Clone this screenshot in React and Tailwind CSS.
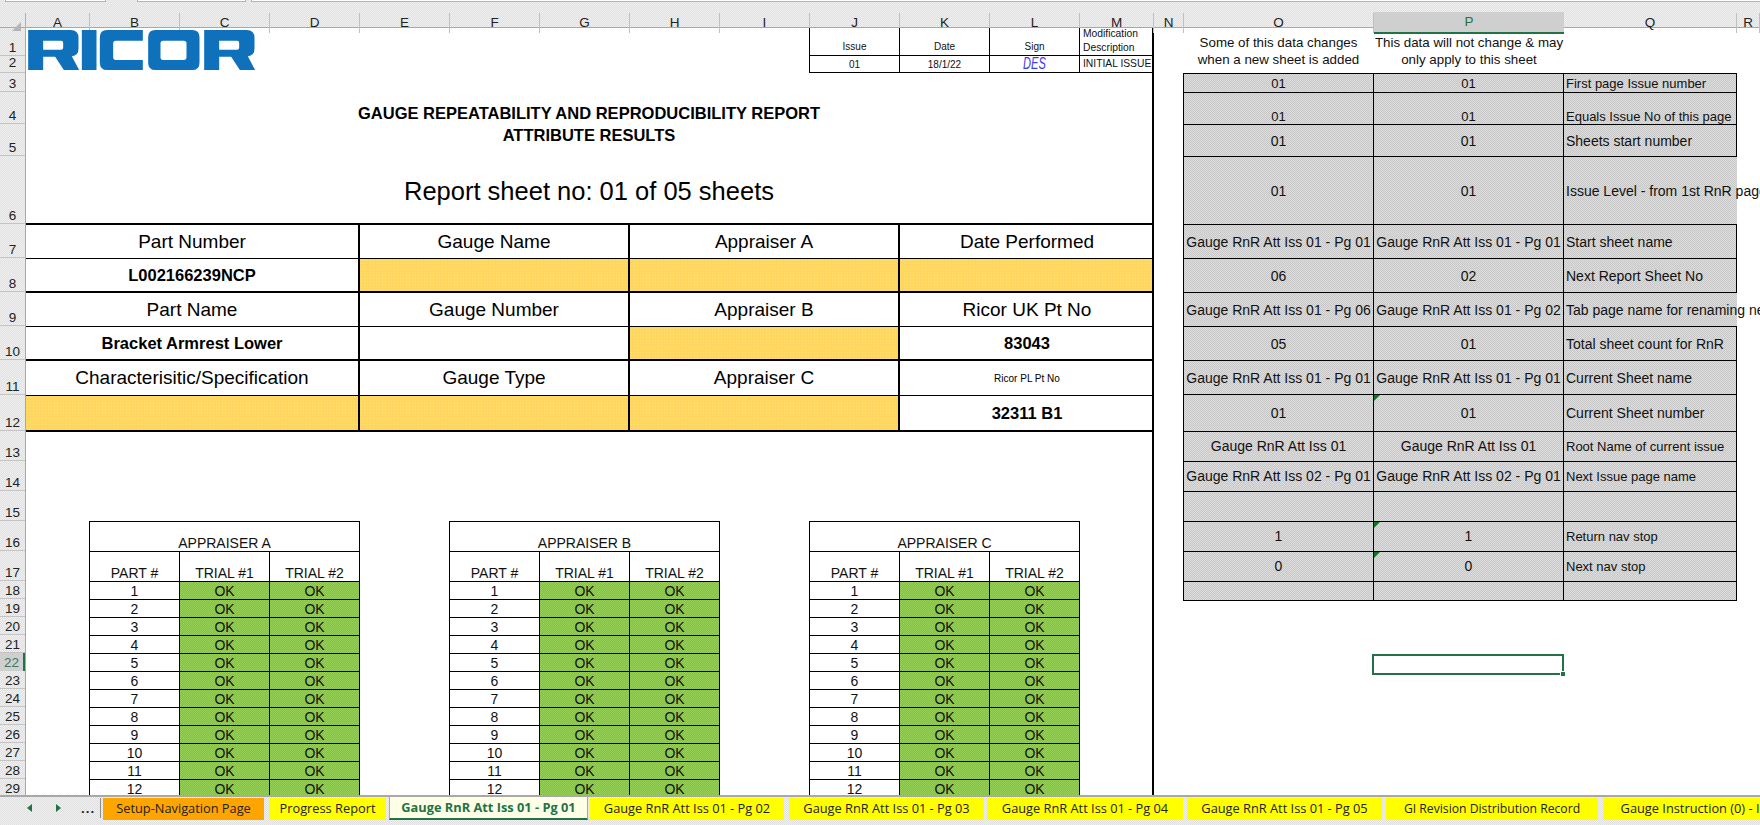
const FONT = "font-['Liberation_Sans',Arial,sans-serif]";
const HEAD_BG = "bg-[#e8e8e8] bg-[conic-gradient(#e0e0e0_25%,#f0f0f0_0_50%,#e0e0e0_0_75%,#f0f0f0_0)] bg-[length:2px_2px]";
const GRAY_BG = "bg-[#d2d2d2] bg-[conic-gradient(#c8c8c8_25%,#dcdcdc_0_50%,#c8c8c8_0_75%,#dcdcdc_0)] bg-[length:2px_2px]";
const GREEN_BG = "bg-[#8cc84f] bg-[conic-gradient(#82c048_25%,#96d056_0_50%,#82c048_0_75%,#96d056_0)] bg-[length:2px_2px]";

const colHeads = ["A", "B", "C", "D", "E", "F", "G", "H", "I", "J", "K", "L", "M", "N", "O", "P", "Q", "R"];
const rowNums = Array.from({ length: 29 }, (_, i) => i + 1);

function Logo() {
  return (
    <svg viewBox="85 90 680 120" className="block w-[227px] h-[40px]" aria-label="RICOR">
      <g fill="#0f71bb" fillRule="evenodd">
        <path d="M85 90H212Q236 90 236 114V146Q236 166 216 169L238 210H192L166 170H130V210H85ZM130 122V149H184Q190 149 190 143V128Q190 122 184 122Z" />
        <path d="M246 90H290V210H246Z" />
        <path d="M322 90H429V122H348Q340 122 340 130V172Q340 180 348 180H429V210H322Q300 210 300 188V112Q300 90 322 90Z" />
        <path d="M467 90H577Q599 90 599 112V188Q599 210 577 210H467Q445 210 445 188V112Q445 90 467 90ZM490 122Q482 122 482 130V172Q482 180 490 180H552Q560 180 560 172V130Q560 122 552 122Z" />
        <path d="M613 90H740Q764 90 764 114V146Q764 166 744 169L766 210H720L694 170H658V210H613ZM658 122V149H712Q718 149 718 143V128Q718 122 712 122Z" />
      </g>
    </svg>
  );
}

function ColumnHeader() {
  return (
    <div className={`relative flex flex-col h-[28px] shrink-0 border-b border-[#a8a8a8] ${HEAD_BG}`}>
      <div className="flex h-[3px] shrink-0">
        <div className="ml-[5px] w-[101px] h-[2px] bg-white border-x border-b border-[#b4b4b4]" />
        <div className="ml-[31px] w-[109px] h-[2px] bg-white border-x border-b border-[#b4b4b4]" />
        <div className="ml-[5px] flex-1 h-[2px] bg-white border-l border-b border-[#b4b4b4]" />
      </div>
      <div className="flex flex-1">
        <div className="relative w-[26px] shrink-0 border-r border-[#b0b0b0] mt-[10px]">
          <div className="absolute right-[4px] bottom-[2px] w-0 h-0 border-l-[9px] border-b-[9px] border-l-transparent border-b-[#b4b4b4]" />
        </div>
        <div className="grid grid-cols-[64px_repeat(11,90px)_74px_30px_190px_190px_173px_1fr] flex-1">
          {colHeads.map((c) => (
            <div
              key={c}
              className={
                c === "P"
                  ? "mt-[9px] -mb-px flex items-center justify-center bg-[#cfcfcf] text-[#217346] border-b-2 border-[#217346] text-[13.5px]"
                  : "mt-[10px] flex items-center justify-center border-r border-[#c0c0c0] text-[13.5px] text-[#222]"
              }
            >
              {c}
            </div>
          ))}
        </div>
      </div>
    </div>
  );
}

function RowHeader() {
  return (
    <div className={`grid w-[26px] shrink-0 grid-rows-[28px_17px_19px_32px_32px_68px_34px_34px_34px_34px_35px_36px_30px_30px_30px_30px_30px_repeat(12,18px)] border-r border-[#a8a8a8] ${HEAD_BG}`}>
      {rowNums.map((n) => (
        <div
          key={n}
          className={
            n === 22
              ? "flex items-end justify-center bg-[#cfcfcf] text-[#3b7a5a] border-r-2 border-[#217346] text-[13.5px] leading-[15px] pb-px"
              : n === 2
                ? "flex items-end justify-center border-b border-[#c4c4c4] text-[13.5px] leading-[15px] pb-[2px] text-[#222]"
                : "flex items-end justify-center border-b border-[#c4c4c4] text-[13.5px] leading-[15px] text-[#222]"
          }
        >
          {n}
        </div>
      ))}
    </div>
  );
}

function IssueBlock() {
  return (
    <div className="ml-[783px] w-[345px] text-[10px] text-[#111]">
      <div className="grid grid-cols-[91px_90px_90px_74px] h-[28px] border-b border-black">
        <div className="border-l border-r border-black flex items-end justify-center pb-[1px] leading-[14px]">Issue</div>
        <div className="border-r border-black flex items-end justify-center pb-[1px] leading-[14px]">Date</div>
        <div className="border-r border-black flex items-end justify-center pb-[1px] leading-[14px]">Sign</div>
        <div className="pl-[3px] leading-[14px] -mt-[1px] whitespace-nowrap text-[10.3px]">
          Modification
          <br />
          Description
        </div>
      </div>
      <div className="grid grid-cols-[91px_90px_90px_74px] h-[17px] border-b border-black">
        <div className="border-l border-r border-black flex items-center justify-center">01</div>
        <div className="border-r border-black flex items-center justify-center">18/1/22</div>
        <div className="border-r border-black flex items-center justify-center overflow-visible">
          <span className="block italic text-[17px] leading-[14px] text-[#3c3ce6] scale-x-[0.65] font-light">DES</span>
        </div>
        <div className="pl-[3px] flex items-center whitespace-nowrap text-[10.3px]">INITIAL ISSUE</div>
      </div>
    </div>
  );
}

const info = [
  [
    { t: "Part Number", k: "h" },
    { t: "Gauge Name", k: "h" },
    { t: "Appraiser A", k: "h" },
    { t: "Date Performed", k: "h" },
  ],
  [
    { t: "L002166239NCP", k: "b" },
    { t: "", k: "y" },
    { t: "", k: "y" },
    { t: "", k: "y" },
  ],
  [
    { t: "Part Name", k: "h" },
    { t: "Gauge Number", k: "h" },
    { t: "Appraiser B", k: "h" },
    { t: "Ricor UK Pt No", k: "h" },
  ],
  [
    { t: "Bracket Armrest Lower", k: "b" },
    { t: "", k: "" },
    { t: "", k: "y" },
    { t: "83043", k: "b" },
  ],
  [
    { t: "Characterisitic/Specification", k: "h" },
    { t: "Gauge Type", k: "h" },
    { t: "Appraiser C", k: "h" },
    { t: "Ricor PL Pt No", k: "s" },
  ],
  [
    { t: "", k: "y" },
    { t: "", k: "y" },
    { t: "", k: "y" },
    { t: "32311 B1", k: "b" },
  ],
];

const goldCls = "bg-[#ffd75e] bg-[radial-gradient(#ffe27f_0.6px,transparent_0.7px)] bg-[length:3px_3px]";

function InfoTable() {
  return (
    <div className="grid grid-cols-[334px_270px_270px_254px] grid-rows-[34px_34px_34px_34px_35px_36px] border-t-2 border-black -mt-px">
      {info.flat().map((c, i) => {
        const row = Math.floor(i / 4);
        const col = i % 4;
        const heavyBottom = row % 2 === 1;
        return (
          <div
            key={i}
            className={[
              "flex items-center justify-center",
              col < 3 ? "border-r-2 border-r-black" : "",
              heavyBottom ? "border-b-2 border-b-black" : "border-b border-b-black",
              c.k === "y" ? goldCls : "",
              c.k === "h" ? "text-[19px] pt-px" : "",
              c.k === "b" ? "text-[16.5px] font-bold" : "",
              c.k === "s" ? "text-[10px]" : "",
            ].join(" ")}
          >
            {c.t}
          </div>
        );
      })}
    </div>
  );
}

const trials = Array.from({ length: 12 }, (_, i) => i + 1);

function AppraiserTable({ name }) {
  return (
    <div className="w-[271px] shrink-0 text-[14px] text-[#111] border-l border-t border-black">
      <div className="h-[30px] flex items-end justify-center border-r border-b border-black leading-[15px]">{name}</div>
      <div className="grid grid-cols-[90px_90px_90px] grid-rows-[30px_repeat(12,18px)]">
        <div className="flex items-end justify-center border-r border-b border-black leading-[15px]">PART #</div>
        <div className="flex items-end justify-center border-r border-b border-black leading-[15px]">TRIAL #1</div>
        <div className="flex items-end justify-center border-r border-b border-black leading-[15px]">TRIAL #2</div>
        {trials.map((n) => [
          <div key={n + "p"} className="flex items-center justify-center border-r border-b border-black pt-px">{n}</div>,
          <div key={n + "a"} className={`flex items-center justify-center border-r border-b border-black pt-px ${GREEN_BG}`}>OK</div>,
          <div key={n + "b"} className={`flex items-center justify-center border-r border-b border-black pt-px ${GREEN_BG}`}>OK</div>,
        ])}
      </div>
    </div>
  );
}

function ReportSheet() {
  return (
    <div className={`w-[1128px] shrink-0 h-full overflow-hidden border-r-2 border-black text-black ${FONT}`}>
      <div className="relative h-[45px]">
        <div className="absolute left-[2px] top-[2px]">
          <Logo />
        </div>
        <IssueBlock />
      </div>
      <div className="h-[151px] flex flex-col items-center">
        <div className="mt-[29px] text-[16.5px] font-bold leading-[22px] text-center">
          GAUGE REPEATABILITY AND REPRODUCIBILITY REPORT
          <br />
          ATTRIBUTE RESULTS
        </div>
        <div className="mt-[29px] text-[25.5px] leading-[32px]">Report sheet no: 01 of 05 sheets</div>
      </div>
      <InfoTable />
      <div className="h-[89px]" />
      <div className="flex pl-[63px] gap-[89px]">
        <AppraiserTable name="APPRAISER A" />
        <AppraiserTable name="APPRAISER B" />
        <AppraiserTable name="APPRAISER C" />
      </div>
    </div>
  );
}

const side = [
  { a: "01", b: "01", c: "First page Issue number", h: "h-[19px]", fq: "text-[13px]", fv: "text-[13px]", al: "items-center pt-[2px]" },
  { a: "01", b: "01", c: "Equals Issue No of this page", h: "h-[32px]", fq: "text-[13px]", fv: "text-[13px]", al: "items-end leading-[14px]" },
  { a: "01", b: "01", c: "Sheets start number", h: "h-[32px]", fq: "text-[14px]", fv: "text-[14px]", al: "items-center pt-[2px]" },
  { a: "01", b: "01", c: "Issue Level - from 1st RnR page", h: "h-[68px]", fq: "text-[14px]", fv: "text-[14px]", al: "items-center pt-[2px]", over: true },
  { a: "Gauge RnR Att Iss 01 - Pg 01", b: "Gauge RnR Att Iss 01 - Pg 01", c: "Start sheet name", h: "h-[34px]", fq: "text-[14px]", fv: "text-[14px]", al: "items-center pt-[2px]" },
  { a: "06", b: "02", c: "Next Report Sheet No", h: "h-[34px]", fq: "text-[14px]", fv: "text-[14px]", al: "items-center pt-[2px]" },
  { a: "Gauge RnR Att Iss 01 - Pg 06", b: "Gauge RnR Att Iss 01 - Pg 02", c: "Tab page name for renaming next sheet", h: "h-[34px]", fq: "text-[14px]", fv: "text-[14px]", al: "items-center pt-[2px]", over: true },
  { a: "05", b: "01", c: "Total sheet count for RnR", h: "h-[34px]", fq: "text-[14px]", fv: "text-[14px]", al: "items-center pt-[2px]" },
  { a: "Gauge RnR Att Iss 01 - Pg 01", b: "Gauge RnR Att Iss 01 - Pg 01", c: "Current Sheet name", h: "h-[34px]", fq: "text-[14px]", fv: "text-[14px]", al: "items-center pt-[2px]" },
  { a: "01", b: "01", c: "Current Sheet number", h: "h-[37px]", fq: "text-[14px]", fv: "text-[14px]", al: "items-center", tri: true },
  { a: "Gauge RnR Att Iss 01", b: "Gauge RnR Att Iss 01", c: "Root Name of current issue", h: "h-[30px]", fq: "text-[13px]", fv: "text-[14px]", al: "items-center" },
  { a: "Gauge RnR Att Iss 02 - Pg 01", b: "Gauge RnR Att Iss 02 - Pg 01", c: "Next Issue page name", h: "h-[30px]", fq: "text-[13px]", fv: "text-[14px]", al: "items-center" },
  { a: "", b: "", c: "", h: "h-[30px]", fq: "text-[13px]", fv: "text-[14px]", al: "items-center" },
  { a: "1", b: "1", c: "Return nav stop", h: "h-[30px]", fq: "text-[13px]", fv: "text-[14px]", al: "items-center", tri: true },
  { a: "0", b: "0", c: "Next nav stop", h: "h-[30px]", fq: "text-[13px]", fv: "text-[14px]", al: "items-center", tri: true },
  { a: "", b: "", c: "", h: "h-[19px]", fq: "text-[13px]", fv: "text-[14px]", al: "items-center" },
];

function SidePanel() {
  return (
    <div className={`ml-[29px] w-[607px] shrink-0 text-[#111] ${FONT}`}>
      <div className="flex h-[45px] text-[13.33px] leading-[17px] pt-[6px]">
        <div className="w-[191px] text-center">
          Some of this data changes
          <br />
          when a new sheet is added
        </div>
        <div className="w-[190px] text-center">
          This data will not change &amp; may
          <br />
          only apply to this sheet
        </div>
      </div>
      <div className="w-[554px] border-t border-l border-black">
        {side.map((r, i) => (
          <div key={i} className={`flex ${r.h}`}>
            <div className={`w-[190px] flex ${r.al} ${r.fv} justify-center border-r border-b border-black whitespace-nowrap ${GRAY_BG}`}>{r.a}</div>
            <div className={`relative w-[190px] flex ${r.al} ${r.fv} justify-center border-r border-b border-black whitespace-nowrap ${GRAY_BG}`}>
              {r.tri && <div className="absolute left-0 top-0 w-0 h-0 border-t-[6px] border-r-[6px] border-t-[#0a7a1e] border-r-transparent" />}
              {r.b}
            </div>
            <div
              className={
                r.over
                  ? `relative z-10 w-[173px] flex ${r.al} ${r.fq} pl-[2px] border-b border-black whitespace-nowrap ${GRAY_BG}`
                  : `w-[173px] flex ${r.al} ${r.fq} pl-[2px] border-r border-b border-black whitespace-nowrap ${GRAY_BG}`
              }
            >
              {r.c}
            </div>
          </div>
        ))}
      </div>
      <div className="relative ml-[189px] mt-[53px] w-[192px] h-[21px] border-2 border-[#217346]">
        <div className="absolute -right-[4px] -bottom-[4px] w-[6px] h-[6px] bg-[#217346] border border-white" />
      </div>
    </div>
  );
}

const tabs = [
  { t: "Setup-Navigation Page", cls: "w-[161px] bg-[#ffa500] text-[12.8px]" },
  { t: "Progress Report", cls: "ml-[5px] w-[117px] bg-[#ffff00] text-[12.8px]" },
  { t: "Gauge RnR Att Iss 01 - Pg 01", active: true },
  { t: "Gauge RnR Att Iss 01 - Pg 02", cls: "ml-[2px] w-[194px] bg-[#ffff00] text-[12.8px]" },
  { t: "Gauge RnR Att Iss 01 - Pg 03", cls: "ml-[5px] w-[195px] bg-[#ffff00] text-[12.8px]" },
  { t: "Gauge RnR Att Iss 01 - Pg 04", cls: "ml-[3px] w-[196px] bg-[#ffff00] text-[12.8px]" },
  { t: "Gauge RnR Att Iss 01 - Pg 05", cls: "ml-[4px] w-[195px] bg-[#ffff00] text-[12.8px]" },
  { t: "GI Revision Distribution Record", cls: "ml-[4px] w-[212px] bg-[#ffff00] text-[12.2px]" },
  { t: "Gauge Instruction (0) - Issue 1", cls: "ml-[5px] w-[212px] bg-[#ffff00] text-[12.8px]" },
];

function TabBar() {
  return (
    <div className={`relative z-20 flex h-[30px] shrink-0 items-start border-t-[2px] border-[#a8a8a8] font-['Open_Sans',sans-serif] text-[#222] overflow-hidden ${HEAD_BG}`}>
      <div className="relative w-[103px] h-[26px] shrink-0">
        <div className="absolute left-[27px] top-[7px] w-0 h-0 border-y-[4px] border-r-[5px] border-y-transparent border-r-[#217346]" />
        <div className="absolute left-[56px] top-[7px] w-0 h-0 border-y-[4px] border-l-[5px] border-y-transparent border-l-[#217346]" />
        <div className="absolute left-[81px] top-[2px] text-[13px] font-bold tracking-[1px]">...</div>
        <div className="absolute right-[2px] top-[1px] h-[20px] w-px bg-[#8c8c8c]" />
      </div>
      <div className="flex items-start">
        {tabs.map((tab) =>
          tab.active ? (
            <div
              key={tab.t}
              className="ml-[3px] w-[199px] shrink-0 h-[23px] flex items-center justify-center whitespace-nowrap bg-[#ffffe8] text-[12.8px] font-bold text-[#217346] border-b-2 border-[#217346] border-x border-x-[#a8a8a8]"
            >
              {tab.t}
            </div>
          ) : (
            <div key={tab.t} className={`${tab.cls} shrink-0 h-[22px] mt-[1px] flex items-center justify-center whitespace-nowrap`}>
              {tab.t}
            </div>
          ),
        )}
      </div>
    </div>
  );
}

export default function App() {
  return (
    <div className={`flex flex-col w-[1760px] h-[825px] overflow-hidden bg-white ${FONT}`}>
      <ColumnHeader />
      <div className="flex flex-1 min-h-0 overflow-hidden">
        <RowHeader />
        <div className="flex flex-1 min-w-0 overflow-hidden">
          <ReportSheet />
          <SidePanel />
        </div>
      </div>
      <TabBar />
    </div>
  );
}
